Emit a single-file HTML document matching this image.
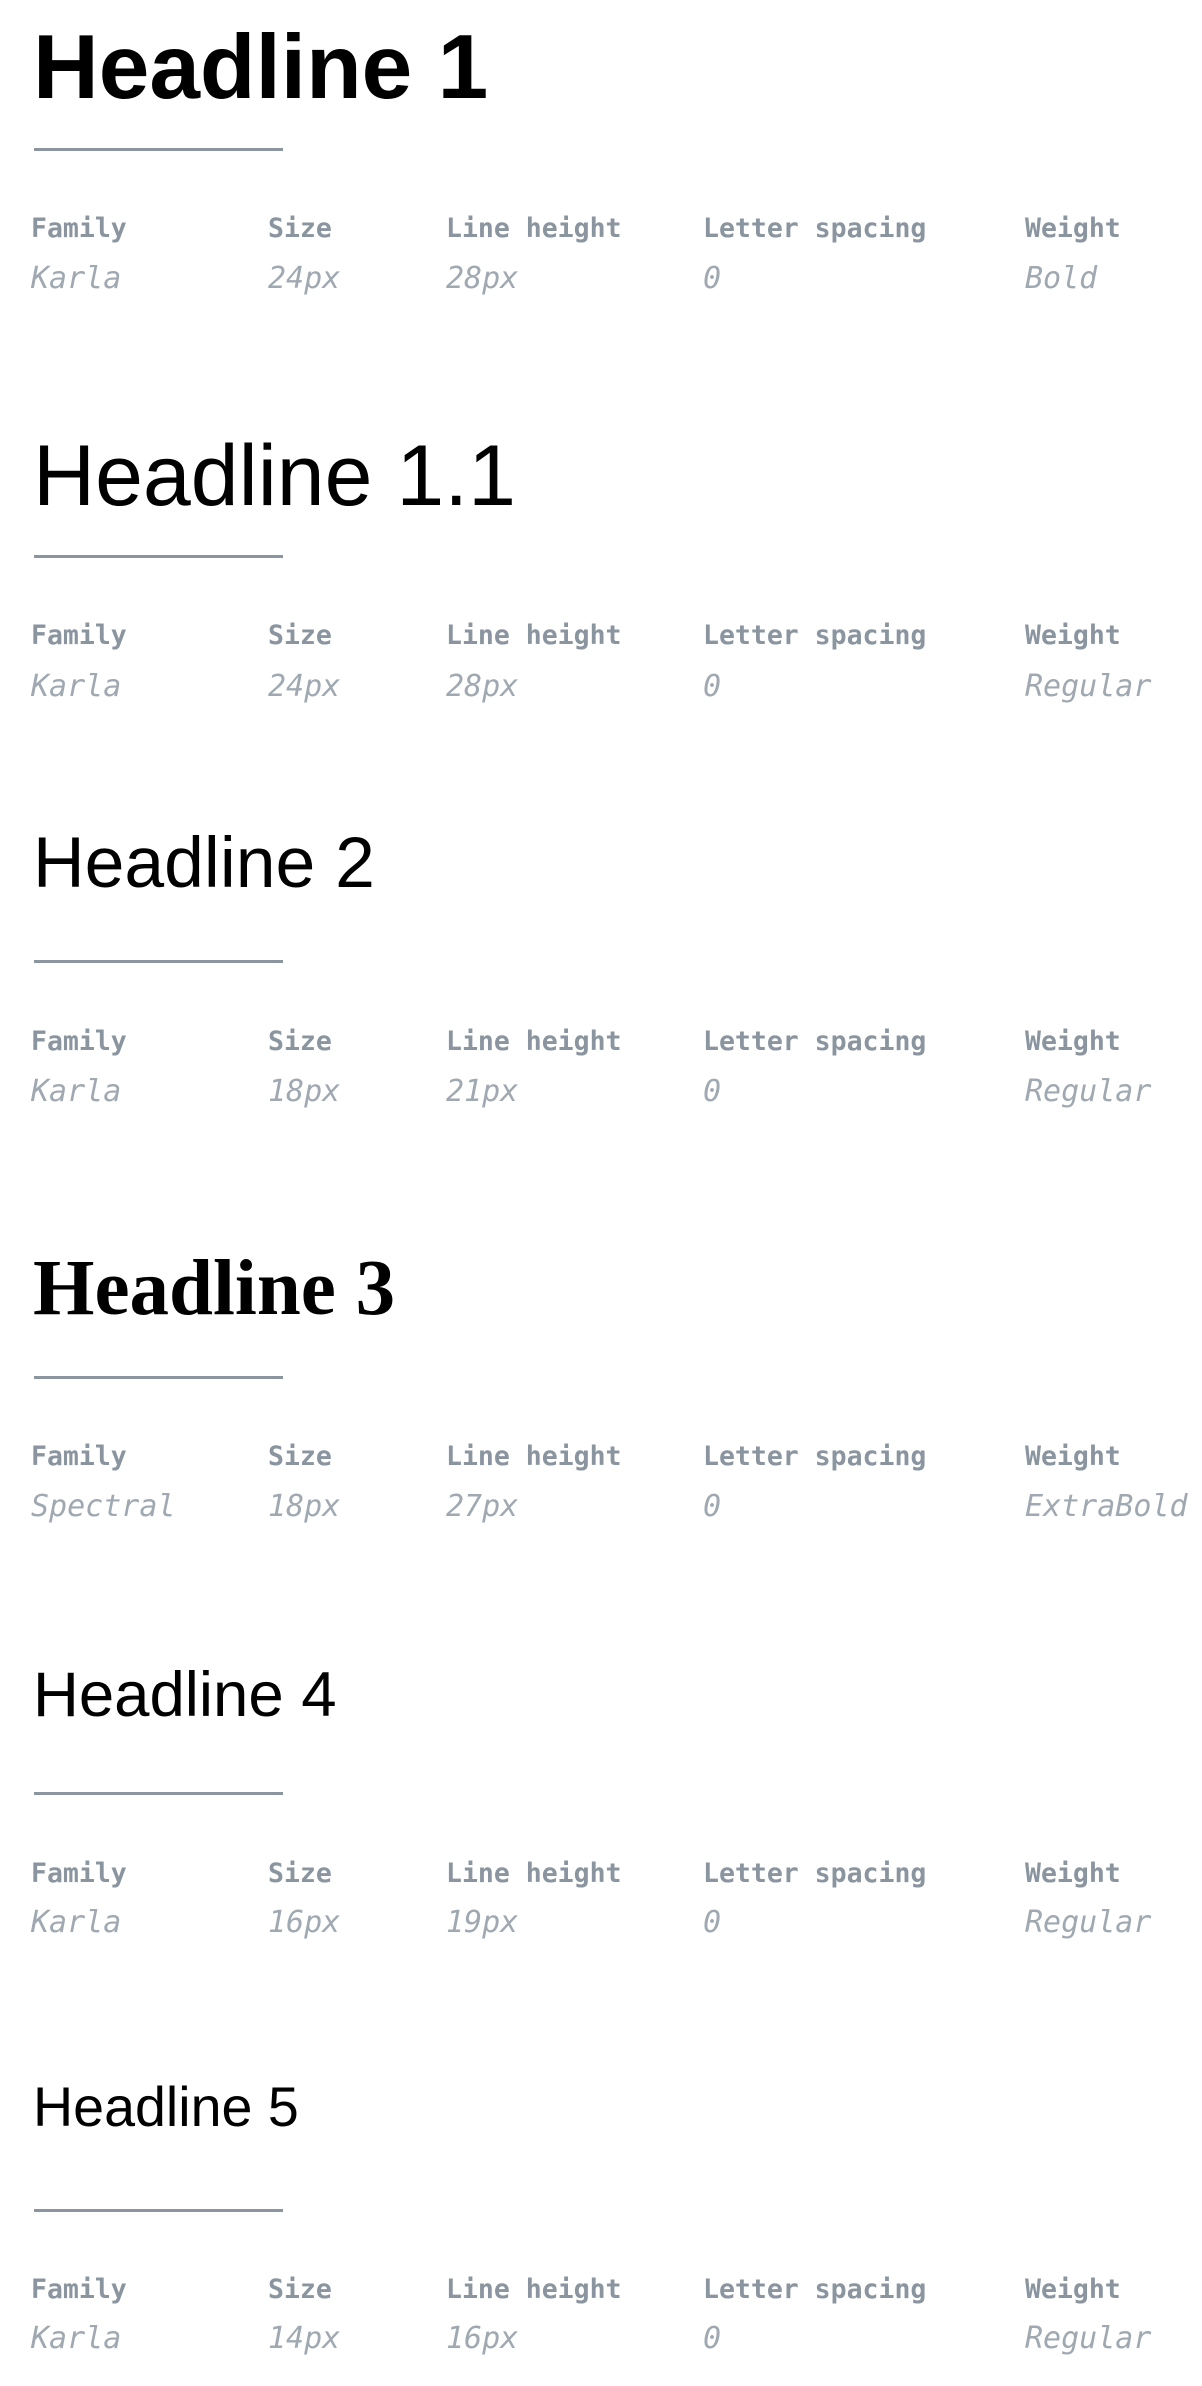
<!DOCTYPE html>
<html><head><meta charset="utf-8"><style>
html,body{margin:0;padding:0;background:#fff;width:1202px;height:2386px;overflow:hidden;position:relative}
.h{position:absolute;left:33px;margin:0;line-height:1;color:#000;font-family:"Liberation Sans",sans-serif;font-weight:400;white-space:nowrap}
.ln{position:absolute;left:34px;width:249px;height:3px;background:#8a959f}
.r{position:absolute;left:0;width:1202px;height:30px;line-height:30px;font-family:"DejaVu Sans Mono","Liberation Mono",monospace;font-size:26.5px;white-space:nowrap}
.r span{position:absolute;top:0}
.lab{color:#8a959f;font-weight:bold}
.val{color:#a0a9b1;font-style:italic;font-size:30px}
.c1{left:31px}.c2{left:268px}.c3{left:446px}.c4{left:703px}.c5{left:1025px}
</style></head><body>

<div class="h" style="top:22px;font-size:91px;font-weight:bold">Headline 1</div>
<div class="ln" style="top:148px"></div>
<div class="r lab" style="top:214px"><span class="c1">Family</span><span class="c2">Size</span><span class="c3">Line height</span><span class="c4">Letter spacing</span><span class="c5">Weight</span></div>
<div class="r val" style="top:264px"><span class="c1">Karla</span><span class="c2">24px</span><span class="c3">28px</span><span class="c4">0</span><span class="c5">Bold</span></div>

<div class="h" style="top:433px;font-size:86px">Headline 1.1</div>
<div class="ln" style="top:555px"></div>
<div class="r lab" style="top:621px"><span class="c1">Family</span><span class="c2">Size</span><span class="c3">Line height</span><span class="c4">Letter spacing</span><span class="c5">Weight</span></div>
<div class="r val" style="top:672px"><span class="c1">Karla</span><span class="c2">24px</span><span class="c3">28px</span><span class="c4">0</span><span class="c5">Regular</span></div>

<div class="h" style="top:828px;font-size:71.5px">Headline 2</div>
<div class="ln" style="top:960px"></div>
<div class="r lab" style="top:1027px"><span class="c1">Family</span><span class="c2">Size</span><span class="c3">Line height</span><span class="c4">Letter spacing</span><span class="c5">Weight</span></div>
<div class="r val" style="top:1077px"><span class="c1">Karla</span><span class="c2">18px</span><span class="c3">21px</span><span class="c4">0</span><span class="c5">Regular</span></div>

<div class="h" style="top:1249px;font-size:79px;font-family:'Liberation Serif',serif;font-weight:bold">Headline 3</div>
<div class="ln" style="top:1376px"></div>
<div class="r lab" style="top:1442px"><span class="c1">Family</span><span class="c2">Size</span><span class="c3">Line height</span><span class="c4">Letter spacing</span><span class="c5">Weight</span></div>
<div class="r val" style="top:1492px"><span class="c1">Spectral</span><span class="c2">18px</span><span class="c3">27px</span><span class="c4">0</span><span class="c5">ExtraBold</span></div>

<div class="h" style="top:1664px;font-size:63.5px">Headline 4</div>
<div class="ln" style="top:1792px"></div>
<div class="r lab" style="top:1859px"><span class="c1">Family</span><span class="c2">Size</span><span class="c3">Line height</span><span class="c4">Letter spacing</span><span class="c5">Weight</span></div>
<div class="r val" style="top:1908px"><span class="c1">Karla</span><span class="c2">16px</span><span class="c3">19px</span><span class="c4">0</span><span class="c5">Regular</span></div>

<div class="h" style="top:2080px;font-size:55.6px">Headline 5</div>
<div class="ln" style="top:2209px"></div>
<div class="r lab" style="top:2275px"><span class="c1">Family</span><span class="c2">Size</span><span class="c3">Line height</span><span class="c4">Letter spacing</span><span class="c5">Weight</span></div>
<div class="r val" style="top:2324px"><span class="c1">Karla</span><span class="c2">14px</span><span class="c3">16px</span><span class="c4">0</span><span class="c5">Regular</span></div>

</body></html>
